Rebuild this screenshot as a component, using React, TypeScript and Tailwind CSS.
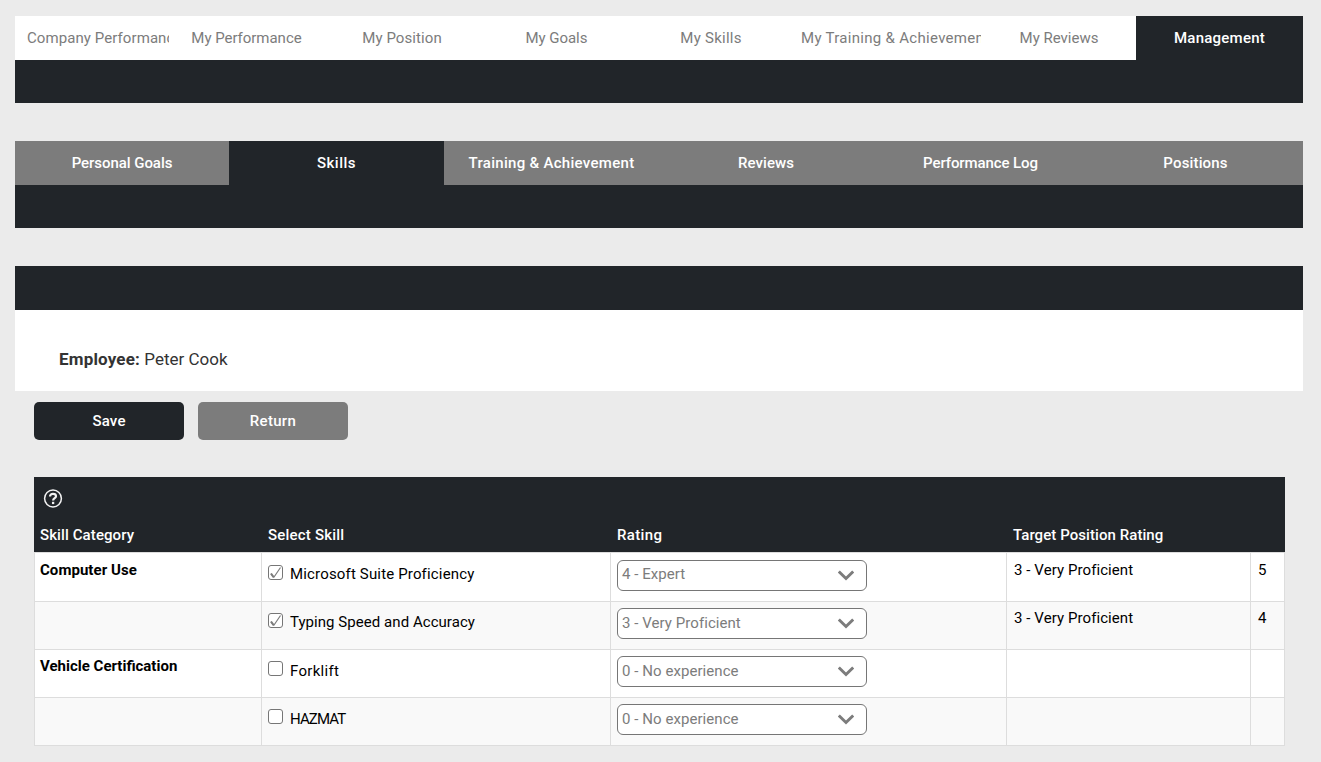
type Tab = { label: string; box: string; tracking: string; active?: boolean };

const mainTabs: Tab[] = [
  { label: "Company Performance", box: "w-[154px]", tracking: "tracking-[0.08px]" },
  { label: "My Performance", box: "w-[155px]", tracking: "tracking-[-0.03px]" },
  { label: "My Position", box: "w-[155px]", tracking: "tracking-[0.08px] pl-px" },
  { label: "My Goals", box: "w-[154px]", tracking: "tracking-[-0.05px] pl-px" },
  { label: "My Skills", box: "w-[155px]", tracking: "tracking-[0.25px] pl-px" },
  { label: "My Training & Achievement", box: "w-[193px]", tracking: "tracking-[0.3px] pl-px" },
  { label: "My Reviews", box: "w-[155px]", tracking: "tracking-normal pl-px" },
  { label: "Management", box: "w-[167px]", tracking: "tracking-[0.25px]", active: true },
];

const subTabs: Tab[] = [
  { label: "Personal Goals", box: "w-[214px]", tracking: "tracking-[-0.05px]" },
  { label: "Skills", box: "w-[215px]", tracking: "tracking-[0.5px]", active: true },
  { label: "Training & Achievement", box: "w-[215px]", tracking: "tracking-[0.3px]" },
  { label: "Reviews", box: "w-[214px]", tracking: "tracking-[0.05px]" },
  { label: "Performance Log", box: "w-[215px]", tracking: "tracking-[-0.1px]" },
  { label: "Positions", box: "w-[215px]", tracking: "tracking-[0.15px]" },
];

const rows = [
  { category: "Computer Use", catTracking: "tracking-[0.05px]", skill: "Microsoft Suite Proficiency", tracking: "tracking-[0.16px]", checked: true, rating: "4 - Expert", target: "3 - Very Proficient", score: "5", drop: "pt-[13px]", lift: "-mt-[3px]" },
  { category: "", catTracking: "", skill: "Typing Speed and Accuracy", tracking: "tracking-[0.05px]", checked: true, rating: "3 - Very Proficient", target: "3 - Very Proficient", score: "4", drop: "pt-[13px]", lift: "-mt-px" },
  { category: "Vehicle Certification", catTracking: "tracking-normal", skill: "Forklift", tracking: "tracking-[0.3px]", checked: false, rating: "0 - No experience", target: "", score: "", drop: "pt-[14px]", lift: "-mt-px" },
  { category: "", catTracking: "", skill: "HAZMAT", tracking: "tracking-[-0.9px]", checked: false, rating: "0 - No experience", target: "", score: "", drop: "pt-[14px]", lift: "-mt-px" },
];

function HelpIcon() {
  return (
    <svg width="20" height="20" viewBox="0 0 20 20" fill="none" stroke="#f2f2f2">
      <circle cx="10" cy="9.5" r="8.4" strokeWidth="1.5" />
      <path d="M7 7.4C7 5.700 8.200 4.900 10 4.900C11.800 4.900 13 5.800 13 7.200C13 9.200 10.100 9.100 10.100 11.600" strokeWidth="2.200" />
      <path d="M10.100 12.800V15.100" strokeWidth="2.300" />
    </svg>
  );
}

function Checkbox({ checked }: { checked: boolean }) {
  return (
    <span className="mt-3 block size-[15px] shrink-0 rounded-[3px] border border-[#767676] bg-white">
      {checked && (
        <svg width="13" height="13" viewBox="0 0 13 13" fill="none" stroke="#7c7c7c" strokeLinejoin="bevel">
          <path d="M2 7.500L4.700 11.500L11.500 1.500" strokeWidth="1.200" />
          <path d="M2 7.700L4.600 11.200" strokeWidth="2" />
        </svg>
      )}
    </span>
  );
}

function RatingSelect({ value, lift }: { value: string; lift: string }) {
  return (
    <div className="mt-[7px] flex h-[31px] w-[250px] items-center justify-between rounded-[6px] border border-[#767676] bg-white pl-1 pr-3 text-[#7c7c7c]">
      <span className={`tracking-[0.06px] ${lift}`}>{value}</span>
      <svg width="16" height="11" viewBox="0 0 16 11" fill="none" stroke="#7c7c7c" strokeWidth="3">
        <path d="M0.800 1.500L8 8.500L15.200 1.500" />
      </svg>
    </div>
  );
}

export default function App() {
  return (
    <div className="h-[762px] w-[1321px] overflow-hidden bg-[#ebebeb] pl-[15px] pt-4 font-['Roboto',sans-serif] text-[15px] leading-5 text-black">
      <div className="w-[1288px]">
        <nav className="flex h-11 bg-white">
          {mainTabs.map((t) => (
            <div key={t.label} className={`${t.box} overflow-hidden ${t.active ? "bg-[#212529] font-medium text-white" : "text-[#7c7c7c]"}`}>
              <div className={`mx-3 whitespace-nowrap text-center leading-[44px] ${t.tracking}`}>{t.label}</div>
            </div>
          ))}
        </nav>
        <div className="h-[43px] bg-[#212529]" />

        <nav className="mt-[38px] flex h-11 bg-[#7c7c7c] font-medium text-white">
          {subTabs.map((t) => (
            <div key={t.label} className={`${t.box} text-center leading-[44px] ${t.tracking} ${t.active ? "bg-[#212529]" : ""}`}>
              {t.label}
            </div>
          ))}
        </nav>
        <div className="h-[43px] bg-[#212529]" />

        <div className="mt-[38px] h-11 bg-[#212529]" />
        <div className="h-[81px] bg-white pl-11 pt-[39px] text-[17px] text-[#333]">
          <b className="tracking-[0.18px]">Employee:</b> <span>Peter Cook</span>
        </div>

        <div className="mt-[11px] flex gap-3.5 pl-[19px] font-medium text-white">
          <button className="h-[38px] w-[150px] rounded-[5px] bg-[#212529] tracking-[0.2px]">Save</button>
          <button className="h-[38px] w-[150px] rounded-[5px] bg-[#7c7c7c] tracking-[0.3px]">Return</button>
        </div>

        <div className="ml-[19px] mt-[37px] w-[1251px]">
          <div className="h-[75px] bg-[#212529] font-medium text-white">
            <div className="h-12 pl-[9px] pt-3">
              <HelpIcon />
            </div>
            <div className="grid grid-cols-[227px_349px_396px_244px_35px]">
              <div className="pl-1.5 tracking-[0.1px]">Skill Category</div>
              <div className="pl-[7px] tracking-[0.2px]">Select Skill</div>
              <div className="pl-[7px] tracking-[0.35px]">Rating</div>
              <div className="pl-[7px] tracking-[0.07px]">Target Position Rating</div>
            </div>
          </div>

          <div className="border-b border-r border-[#ddd]">
            {rows.map((r, i) => (
              <div
                key={r.skill}
                className={`grid grid-cols-[227px_349px_396px_244px_34px] border-t border-[#ddd] ${i === 0 ? "h-[49px]" : "h-12"} ${i % 2 ? "bg-[#f9f9f9]" : "bg-white"}`}
              >
                {[
                  <b key="c" className={`-ml-px block pt-[7px] ${r.catTracking}`}>{r.category}</b>,
                  <div key="s" className="flex gap-[7px]">
                    <Checkbox checked={r.checked} />
                    <span className={`${r.drop} -mt-0.5 ${r.tracking}`}>{r.skill}</span>
                  </div>,
                  <RatingSelect key="r" value={r.rating} lift={r.lift} />,
                  <div key="t" className="pl-px pt-[7px] tracking-[0.08px]">{r.target}</div>,
                  <div key="n" className="pl-px pt-[7px]">{r.score}</div>,
                ].map((cell, c) => (
                  <div key={c} className="border-l border-[#ddd] pl-1.5">
                    <div className={i === 0 ? "" : "-mt-px"}>{cell}</div>
                  </div>
                ))}
              </div>
            ))}
          </div>
        </div>
      </div>
    </div>
  );
}
